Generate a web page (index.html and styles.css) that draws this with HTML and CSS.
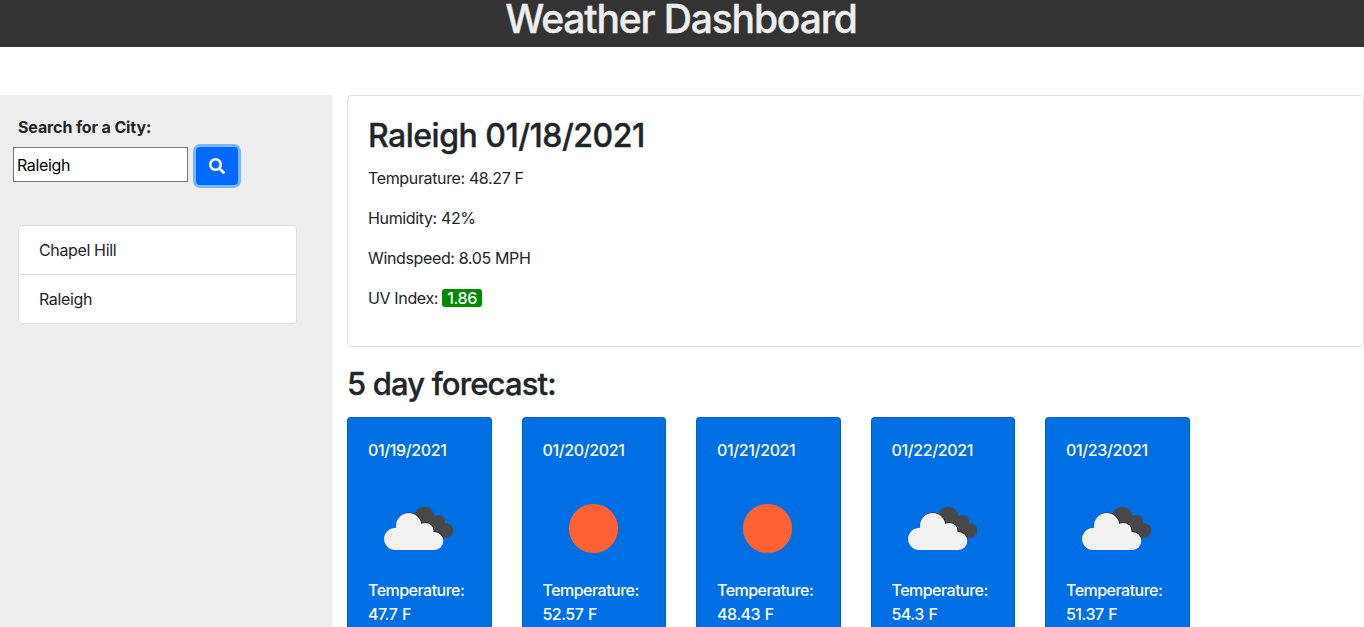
FILE: index.html
```html
<!DOCTYPE html>
<html lang="en">
<head>
<meta charset="utf-8">
<title>Weather Dashboard</title>
<link rel="stylesheet" href="styles.css">
</head>
<body>
<svg width="0" height="0" class="symbols" aria-hidden="true">
  <symbol id="clouds" viewBox="0 0 100 100">
    <g fill="#48484a"><circle cx="56.2" cy="38.9" r="10.2"/><circle cx="70.5" cy="43.5" r="6.6"/><circle cx="78" cy="52.5" r="7.3"/><path d="M53 42L66 37L77 46L77 59.6L67 56Z"/></g>
    <g fill="#222326"><circle cx="41.2" cy="47.4" r="13"/><circle cx="57.8" cy="52.8" r="8.6"/><circle cx="67" cy="62" r="8.7"/></g>
    <g fill="#f2f2f2"><circle cx="27" cy="61" r="10.9"/><circle cx="40.7" cy="47.7" r="12.7"/><circle cx="57.3" cy="53.1" r="8.2"/><circle cx="66.5" cy="63" r="8.9"/><path d="M27 50.1L40 46L57 46L66 55V71.9H27Z"/></g>
  </symbol>
  <symbol id="sun" viewBox="0 0 100 100"><circle cx="50.5" cy="50.5" r="24.6" fill="#ff6034"/></symbol>
</svg>
<header class="banner"><h1>Weather Dashboard</h1></header>
<main class="layout">
  <aside class="sidebar">
    <label class="search-label" for="city">Search for a City:</label>
    <div class="search">
      <input id="city" class="search-input" type="text" value="Raleigh">
      <button class="search-button" aria-label="Search"><svg width="16" height="16" viewBox="0 0 512 512"><path fill="#fff" d="M505 442.700L405.300 343c-4.500-4.500-10.600-7-17-7H372c27.600-35.300 44-79.700 44-128C416 93.100 322.900 0 208 0S0 93.100 0 208s93.100 208 208 208c48.300 0 92.700-16.400 128-44v16.300c0 6.400 2.500 12.500 7 17l99.700 99.700c9.400 9.400 24.600 9.400 33.900 0l28.300-28.300c9.400-9.400 9.400-24.600.1-34zM208 336c-70.700 0-128-57.200-128-128 0-70.700 57.200-128 128-128 70.700 0 128 57.200 128 128 0 70.700-57.200 128-128 128z"/></svg></button>
    </div>
    <ul class="history"><li>Chapel Hill</li><li>Raleigh</li></ul>
  </aside>
  <section class="content">
    <article class="current">
      <h2>Raleigh 01/18/2021</h2>
      <p>Tempurature: 48.27 F</p>
      <p>Humidity: 42%</p>
      <p>Windspeed: 8.05 MPH</p>
      <p>UV Index: <span class="uv">1.86</span></p>
    </article>
    <h2 class="forecast-title">5 day forecast:</h2>
    <div class="forecast">
      <article class="day"><p>01/19/2021</p><svg class="icon"><use href="#clouds"/></svg><p class="temp">Temperature: 47.7 F</p></article>
      <article class="day"><p>01/20/2021</p><svg class="icon"><use href="#sun"/></svg><p class="temp">Temperature: 52.57 F</p></article>
      <article class="day"><p>01/21/2021</p><svg class="icon"><use href="#sun"/></svg><p class="temp">Temperature: 48.43 F</p></article>
      <article class="day"><p>01/22/2021</p><svg class="icon"><use href="#clouds"/></svg><p class="temp">Temperature: 54.3 F</p></article>
      <article class="day"><p>01/23/2021</p><svg class="icon"><use href="#clouds"/></svg><p class="temp">Temperature: 51.37 F</p></article>
    </div>
  </section>
</main>
</body>
</html>
```
FILE: styles.css
```css
* { box-sizing: border-box; }
body { margin: 0; height: 627px; overflow: hidden; background: #fff; color: #212529; font: 400 16px/24px Inter, sans-serif; letter-spacing: -0.36px; }
h1, h2, p, ul { margin: 0; padding: 0; }
.symbols { display: block; height: 0; }
.banner { height: 47px; background: #333; color: #eee; text-align: center; }
.banner h1 { font-size: 39px; font-weight: 500; line-height: 38px; letter-spacing: -1.15px; -webkit-text-stroke: 0.4px #eee; padding-right: 2px; }
.layout { display: flex; gap: 15px; margin-top: 48px; height: 532px; }
.sidebar { width: 332px; flex: none; background: #eee; padding: 20px 0 0 13px; }
.search-label { display: block; font-weight: 700; margin-left: 5px; letter-spacing: -0.12px; }
.search { display: flex; gap: 8px; margin-top: 8px; }
.search-input { width: 175px; height: 35px; border: 1px solid #767676; border-radius: 0; padding: 1px 3px; background: #fff; color: #000; font: inherit; letter-spacing: inherit; }
.search-button { width: 42px; height: 38px; border: 0; border-radius: 4px; padding: 0; background: #0069ff; display: grid; place-items: center; box-shadow: 0 0 0 3px #77b7fd; }
.history { list-style: none; width: 279px; margin: 40px 0 0 5px; background: #fff; border: 1px solid #dfdfdf; border-radius: 4px; }
.history li { height: 48px; padding: 12px 20px; }
.history li + li { height: 49px; border-top: 1px solid #dfdfdf; }
.content { flex: 1; }
.current { height: 252px; border: 1px solid #dfdfdf; border-radius: 4px; padding: 20px; }
h2 { font-size: 31px; font-weight: 500; line-height: 38px; letter-spacing: -0.85px; -webkit-text-stroke: 0.35px #212529; }
.current h2 { font-size: 32px; padding-top: 1px; margin-bottom: 11px; letter-spacing: -0.5px; }
.current p { margin-bottom: 16px; }
.uv { background: #008a00; color: #fff; border-radius: 3px; padding: 0 5px; display: inline-block; line-height: 18px; font-weight: 500; }
.forecast-title { margin: 18px 0 14px; }
.forecast { display: flex; gap: 30px; }
.day { width: 144.5px; height: 210px; padding: 20px 20px 0; background: #006fe3; color: #fff; border: 1px solid #0062c9; border-bottom: 0; border-radius: 4px 4px 0 0; font-weight: 500; }
.icon { display: block; width: 100px; height: 100px; margin-top: 16px; }
.temp { letter-spacing: -0.52px; word-spacing: 1px; }
```
